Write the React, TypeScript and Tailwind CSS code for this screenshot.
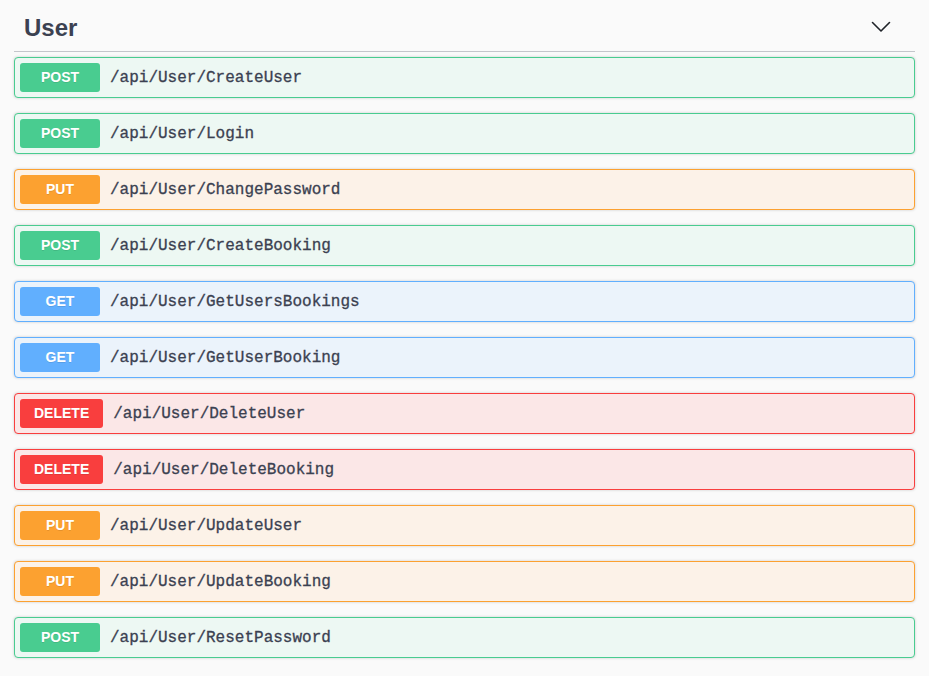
const endpoints: { method: 'POST' | 'GET' | 'PUT' | 'DELETE'; path: string }[] = [
  { method: 'POST', path: '/api/User/CreateUser' },
  { method: 'POST', path: '/api/User/Login' },
  { method: 'PUT', path: '/api/User/ChangePassword' },
  { method: 'POST', path: '/api/User/CreateBooking' },
  { method: 'GET', path: '/api/User/GetUsersBookings' },
  { method: 'GET', path: '/api/User/GetUserBooking' },
  { method: 'DELETE', path: '/api/User/DeleteUser' },
  { method: 'DELETE', path: '/api/User/DeleteBooking' },
  { method: 'PUT', path: '/api/User/UpdateUser' },
  { method: 'PUT', path: '/api/User/UpdateBooking' },
  { method: 'POST', path: '/api/User/ResetPassword' },
];

const styles = {
  POST: { row: 'bg-[#edf8f3] border-[#49cc90]', badge: 'bg-[#49cc90]' },
  GET: { row: 'bg-[#ebf3fb] border-[#61affe]', badge: 'bg-[#61affe]' },
  PUT: { row: 'bg-[#fcf2e8] border-[#fca130]', badge: 'bg-[#fca130]' },
  DELETE: { row: 'bg-[#fbe7e7] border-[#f93e3e]', badge: 'bg-[#f93e3e]' },
};

const App = () => {
  return (
    <div className="min-h-screen bg-[#fafafa] px-[14px]">
      {/* Tag header */}
      <div className="h-[52px] flex items-center justify-between pl-[10px] pr-[24px] border-b border-[#c4c6cb] mb-[5px]">
        <h4 className="pt-[5px] text-[24px] font-bold text-[#3b4151] font-['Liberation_Sans',Arial,sans-serif]">
          User
        </h4>
        <svg width="20" height="12" viewBox="0 0 20 12" className="mt-[2px]" fill="none">
          <path d="M1.5 1.5 L10 10 L18.5 1.5" stroke="#1f2329" strokeWidth="1.6" strokeLinecap="round" strokeLinejoin="round" />
        </svg>
      </div>

      {/* Operations */}
      {endpoints.map((ep) => (
        <div
          key={ep.path}
          className={`mb-[15px] h-[41px] flex items-center px-[5px] border rounded-[4px] shadow-[0_0_3px_rgba(0,0,0,0.19)] ${styles[ep.method].row}`}
        >
          <span
            className={`min-w-[80px] px-[14px] h-[29px] flex items-center justify-center rounded-[3px] text-white text-[14px] font-bold font-['Liberation_Sans',Arial,sans-serif] [text-shadow:0_1px_0_rgba(0,0,0,0.1)] ${styles[ep.method].badge}`}
          >
            {ep.method}
          </span>
          <span className="px-[10px] text-[16px] font-normal [-webkit-text-stroke:0.3px_#3b4151] text-[#3b4151] font-['Liberation_Mono','Courier_New',monospace]">
            {ep.path}
          </span>
        </div>
      ))}
    </div>
  );
};

export default App;
